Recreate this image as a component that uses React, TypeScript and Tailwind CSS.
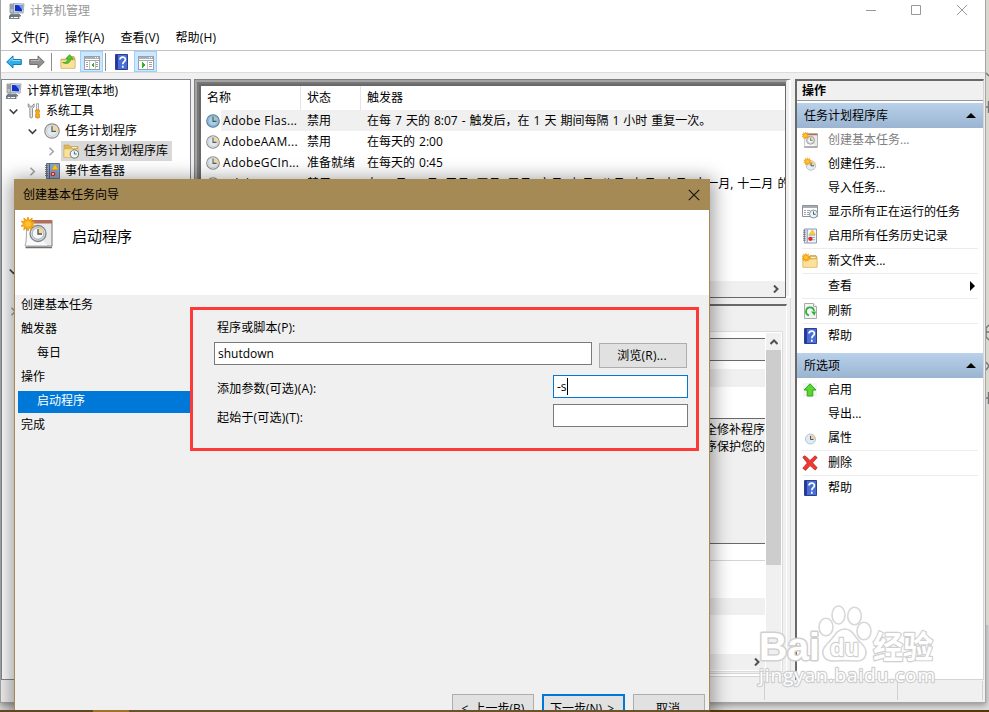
import React from "react";

type P = { className?: string };

const Clock = ({ className = "w-[14px] h-[14px]", blue = false }: P & { blue?: boolean }) => (
  <svg className={className} viewBox="0 0 16 16">
    <circle cx="8" cy="8" r="7.2" fill={blue ? "#9cc3df" : "#f1efe8"} stroke={blue ? "#547f9e" : "#8d8d8d"} strokeWidth="1.2" />
    <circle cx="8" cy="8" r="5.4" fill={blue ? "#a9cde6" : "#dfe8ee"} stroke={blue ? "#7ba5c2" : "#b9bfc3"} strokeWidth=".7" />
    <path d="M8 8V2.8A5.2 5.2 0 0 1 13.2 8Z" fill={blue ? "#b5c3a3" : "#fbd68b"} />
    <path d="M8 3.2V8.4H12" fill="none" stroke={blue ? "#2c5c80" : "#4c5f70"} strokeWidth="1.2" />
  </svg>
);

const SmallClock = () => (
  <svg className="h-4 w-4" viewBox="0 0 16 16">
    <circle cx="8.5" cy="9" r="5" fill="#dfebf4" stroke="#b3c4d2" />
    <path d="M8.500 9V4.500A4.500 4.500 0 0 1 13 9z" fill="#f6cd90" />
    <path d="M8.500 6v3.500h3" fill="none" stroke="#405a72" />
  </svg>
);

const Computer = () => (
  <svg className="w-4 h-4" viewBox="0 0 16 16">
    <path d="M1 1h4v9H1z" fill="#b8c0c8" stroke="#7d868e" strokeWidth=".7" />
    <path d="M1.5 3h3M1.5 5h3" stroke="#5c7080" strokeWidth=".8" />
    <path d="M4.6.6 15 .9l-.9 9.3-9.5-1z" fill="#d7dde4" stroke="#87919b" strokeWidth=".7" />
    <path d="m6 2 7.6.2-.7 6.4L6 8z" fill="#1530c8" />
    <path d="m9.5 2.1 4.1.1-.5 4.4z" fill="#79a6f4" />
    <path d="M2 11h8l2 2H1zM0 13h10v3H0z" fill="#8e98a2" stroke="#56616b" strokeWidth=".7" />
    <path d="M2 14.5h2M5 14.5h4" stroke="#fff" />
  </svg>
);

const Tools = () => (
  <svg className="w-3.5 h-4" viewBox="0 0 14 16">
    <path d="M1.2.8v3l1.7 1.6v8.8q1.3 1.6 2.6 0V5.4l1.6-1.6v-3L5.3 2.6v1.2H3V2.6z" fill="#e5e5e5" stroke="#777" strokeWidth=".8" />
    <path d="M9.5.7h2V7h-2z" fill="#eee" stroke="#888" strokeWidth=".7" />
    <path d="M8.5 7h4v2l-.8 1 .8 1v3.5q-2 1.5-4 0V11l.8-1-.8-1z" fill="#f5aa1c" stroke="#c97d08" strokeWidth=".6" />
  </svg>
);

const Burst = ({ x, y, r }: { x: number; y: number; r: number }) => (
  <g transform={`translate(${x} ${y}) scale(${r / 10})`}>
    <path
      d="M0-10 2-5.2 6-8.6 5.2-3.3 10-3.4 6.2 0 10 4 4.8 3.7 5.4 8.7 1.6 5.3 0 10-2 5.3-6.2 8.5-5 3.5-10 3 -6.4 0-10-4-5-3.5-6-8.6-2-5.4z"
      fill="#ffad12"
      stroke="#e68900"
      strokeWidth="1"
    />
    <circle r="3.6" fill="#ffc83e" />
  </g>
);

const Folder = ({ className = "w-4 h-4", kind = "" }: P & { kind?: string }) => (
  <svg className={className} viewBox="0 0 16 16">
    <path d={kind === "clock" ? "M1 2h5l1.200 1.500H15V14H1z" : "M8 2.500h6l1 1.500v10H1V5h6z"} fill="#dfb658" stroke="#c49a40" strokeWidth=".6" />
    <path d="M1 6h14v8.4H1z" fill="#fae19c" stroke="#d9b35b" strokeWidth=".6" />
    <path d="M9 4.500h4.500" stroke="#fff" strokeWidth=".8" />
    {kind === "up" && <path d="M2.5 8.5C6 9 7.5 7.5 8 4.5H5.8L9.8.6l3.4 4.6-2.4-.3C10.2 9 7 11 2.5 8.5z" fill="#52c92d" stroke="#2d971a" strokeWidth=".6" />}
    {kind === "star" && <Burst x={4} y={4.5} r={4.2} />}
    {kind === "clock" && (
      <g>
        <circle cx="11.4" cy="11" r="4.2" fill="#eef4f8" stroke="#647a8a" strokeWidth="1" />
        <path d="M11.4 8.5V11h2.3" stroke="#40586c" fill="none" strokeWidth=".9" />
      </g>
    )}
  </svg>
);

const Help = ({ className = "w-[13px] h-4" }: P) => (
  <svg className={className} viewBox="0 0 13 16">
    <path d="M.5.5h12v15H.5z" fill="#4a6fd4" stroke="#2a3f94" />
    <path d="M1 1h2v14H1z" fill="#26389a" />
    <path d="M5 5.6C5 2.4 10.4 2.3 10.4 5.4 10.4 7.6 7.8 7.5 7.8 10.2M7.8 11.8v2" fill="none" stroke="#fff" strokeWidth="1.7" />
  </svg>
);

const Pane = ({ left = false }: { left?: boolean }) => (
  <svg className="w-4 h-[14px]" viewBox="0 0 16 14" shapeRendering="crispEdges">
    <path d="M.5.5h15v13H.5z" fill="#fff" stroke="#9aa0a6" />
    <path d="M1 1h14v2H1z" fill="#a7b0b8" />
    <path d="M11 1.5h1m1 0h1" stroke="#fff" />
    <path d="M1 4.5h14" stroke="#a2a9af" />
    {left ? (
      <g>
        <path d="M5.5 5v8M11.5 5v8" stroke="#c2c2c2" />
        <path d="M2 6.5h2m-2 2h2m-2 2h2m8-4h2m-2 2h2m-2 2h2" stroke="#a0a0a0" />
        <path d="M10 6v6L7 9z" fill="#33b322" />
      </g>
    ) : (
      <g>
        <path d="M9.5 5v8" stroke="#c2c2c2" />
        <path d="M11 6.5h3m-3 2h3m-3 2h3" stroke="#a0a0a0" />
        <path d="M4 6v6l3-3z" fill="#33b322" />
      </g>
    )}
  </svg>
);

const Arrow = ({ back = false }: { back?: boolean }) => (
  <svg className="w-4 h-[14px]" viewBox="0 0 16 14">
    <path
      d={back ? "M.7 7 7 .9v3.6h8.3v5H7v3.6z" : "M15.3 7 9 .9v3.6H.7v5H9v3.6z"}
      fill={back ? "#2faee8" : "#929292"}
      stroke={back ? "#1778b8" : "#707070"}
    />
    <path d={back ? "M3 6.5 6.3 3.3v2.2h8" : "M2 5.5h8V3.2"} fill="none" stroke={back ? "#8fdcfb" : "#bcbcbc"} />
  </svg>
);

const Book = ({ className = "w-[15px] h-4", dark = false }: P & { dark?: boolean }) => (
  <svg className={className} viewBox="0 0 15 16">
    <path d="M1.5.5h13v15h-13z" fill={dark ? "#8fa3c6" : "#f0f4fa"} stroke={dark ? "#61718f" : "#8490a8"} />
    <path d="M4.5 1v14" stroke={dark ? "#4d5d80" : "#7686a6"} />
    <path d="M0 2.5h3m-3 2h3m-3 2h3m-3 2h3m-3 2h3m-3 2h3" stroke="#666" strokeWidth=".8" />
    <path d="M6 7h7M6 9.5h7M6 12h7" stroke="#7f92b4" strokeWidth=".8" />
    <path d="m10 1.5 3 5H7z" fill="#ffd21c" stroke="#e0a90f" strokeWidth=".6" />
    <circle cx="8" cy="11" r="2.3" fill="#dd2b20" />
    {dark && <path d="m7 10 2 2m0-2-2 2" stroke="#fff" strokeWidth=".7" />}
  </svg>
);

const BasicTask = ({ className = "w-4 h-4" }: P) => (
  <svg className={className} viewBox="0 0 32 32">
    <path d="M6 4h25v25H6z" fill="#e9e9e9" stroke="#8b8b8b" strokeWidth="1.2" />
    <path d="M7 3h24v3.5H7z" fill="#b0705a" />
    <path d="m6 7-1 18-1 4h23" fill="#fafafa" stroke="#aaa" />
    <path d="M4.500 30.500h26.500" stroke="#6f6f6f" strokeWidth="1.5" />
    <circle cx="17" cy="16.500" r="8" fill="#d9dfe4" stroke="#7d858c" strokeWidth="1.3" />
    <circle cx="17" cy="16.500" r="5.800" fill="#f5f7f8" stroke="#a3abb1" />
    <path d="M17 16.500v-5.500a5.500 5.500 0 0 1 5.500 5.500z" fill="#fbd68b" />
    <path d="M17 12v5h4" fill="none" stroke="#3f5364" strokeWidth="1.3" />
    <Burst x={7} y={7} r={7} />
  </svg>
);

const NewTask = () => (
  <svg className="w-4 h-4" viewBox="0 0 16 16">
    <circle cx="9" cy="9.500" r="4.700" fill="#e3edf4" stroke="#b4c5d2" />
    <path d="M9 9.500V5a4.500 4.500 0 0 1 4.500 4.500z" fill="#f9cf87" />
    <path d="M9 6.500v3.300h3" stroke="#405a72" fill="none" />
    <Burst x={5.5} y={5.5} r={3.8} />
  </svg>
);

const Running = () => (
  <svg className="w-4 h-4" viewBox="0 0 16 16">
    <path d="M.5 1.500h15v11H.5z" fill="#fff" stroke="#8b9299" />
    <path d="M1 2h14v2H1z" fill="#a7adb3" />
    <path d="M2 6.500h2m1 0h3m-6 2h2m1 0h2m-5 2h2m1 0h2" stroke="#999" strokeWidth=".9" />
    <circle cx="11.500" cy="10" r="4" fill="#edf3f7" stroke="#8496a4" />
    <path d="M11.500 7.500v2.800h2.200" stroke="#405a72" fill="none" />
  </svg>
);

const Refresh = () => (
  <svg className="w-[13px] h-4" viewBox="0 0 13 16">
    <path d="M.5.5h9l3 3v12H.5z" fill="#f4f4f4" stroke="#aaa" />
    <path d="M9.500.5v3h3" fill="#fff" stroke="#aaa" />
    <path d="M5 12.300A4 4 0 1 1 10 8" fill="none" stroke="#2caf3b" strokeWidth="1.8" />
    <path d="M7 8.500h5l-1.500 4.200z" fill="#2caf3b" />
  </svg>
);

const Up = () => (
  <svg className="w-[14px] h-[14px]" viewBox="0 0 14 14">
    <path d="M0 0h14v14H0z" fill="#f4f4f4" />
    <path d="m7 .8 6 6.200H9.800V13H4.200V7H1z" fill="#5bd52f" stroke="#2fa51d" />
  </svg>
);

const Delete = () => (
  <svg className="w-4 h-4" viewBox="0 0 16 16">
    <path d="M.8 2.300Q2 0 4 1.500L8 5.600l5-4.800 2.200 1.800-4.700 5.200 4.700 5-2 2.300L8 10.600l-4.500 4.800-2.700-2.200L5.300 8z" fill="#ee3831" stroke="#b62a28" strokeWidth=".8" />
  </svg>
);

const Chev = ({ open = false, light = false }: { open?: boolean; light?: boolean }) => (
  <svg className="w-[9px] h-[9px] shrink-0" viewBox="0 0 9 9">
    <path d={open ? "M.7 2.500 4.500 6.300 8.300 2.500" : "M2.500.7 6.300 4.500 2.500 8.300"} fill="none" stroke={light ? "#a5a5a5" : "#404040"} strokeWidth="1.600" />
  </svg>
);

const ScrollChev = ({ rot = "" }: { rot?: string }) => (
  <svg className={`w-2 h-2 ${rot}`} viewBox="0 0 8 8">
    <path d="M2 .5 5.500 4 2 7.500" fill="none" stroke="#505050" strokeWidth="2" />
  </svg>
);

const actions: { t: string; icon?: React.ReactNode; dim?: boolean; sep?: boolean; sub?: boolean }[] = [
  { t: "创建基本任务...", icon: <BasicTask />, dim: true },
  { t: "创建任务...", icon: <NewTask /> },
  { t: "导入任务..." },
  { t: "显示所有正在运行的任务", icon: <Running /> },
  { t: "启用所有任务历史记录", icon: <Book className="w-[14px] h-4" />, sep: true },
  { t: "新文件夹...", icon: <Folder kind="star" />, sep: true },
  { t: "查看", sep: true, sub: true },
  { t: "刷新", icon: <Refresh />, sep: true },
  { t: "帮助", icon: <Help /> },
];
const selected: typeof actions = [
  { t: "启用", icon: <Up /> },
  { t: "导出..." },
  { t: "属性", icon: <SmallClock />, sep: true },
  { t: "删除", icon: <Delete />, sep: true },
  { t: "帮助", icon: <Help /> },
];

const ActionList = ({ items }: { items: typeof actions }) => (
  <div>
    {items.map((a) => (
      <React.Fragment key={a.t}>
        <div className={`flex h-6 items-center pl-[5px] ${a.dim ? "text-[#808080]" : ""}`}>
          <span className="flex w-4 justify-center">{a.icon}</span>
          <span className="ml-[10px] flex-1">{a.t}</span>
          {a.sub && <span className="mr-2 border-y-[5px] border-l-[5px] border-y-transparent border-l-black" />}
        </div>
        {a.sep && <div className="mx-[5px] h-px bg-[#ececec]" />}
      </React.Fragment>
    ))}
  </div>
);

const SectionHead = ({ t }: { t: string }) => (
  <div className="flex h-[25px] items-center justify-between bg-linear-to-b from-[#b9d1ea] to-[#9ab4d1] pl-[7px] pr-[7px]">
    <span>{t}</span>
    <span className="border-x-[5px] border-b-[5px] border-x-transparent border-b-black" />
  </div>
);

const TaskRow = ({ n, s, t, hi = false }: { n: string; s: string; t: string; hi?: boolean }) => (
  <div className="flex h-[21px] shrink-0 items-center whitespace-nowrap">
    <span className="flex w-5 shrink-0 justify-end pr-px"><Clock blue={hi} /></span>
    <div className={`flex h-full flex-1 items-center ${hi ? "bg-[#f0f0f0]" : ""}`}>
      <span className="w-[84px] shrink-0 pl-[2px] tracking-[0.3px]">{n}</span>
      <span className="w-[60px] shrink-0 pl-[2px]">{s}</span>
      <span className="pl-[2px] [word-spacing:0.9px]">{t}</span>
    </div>
  </div>
);

const Toolbar = () => (
  <div className="flex h-[22px] items-center border-t border-[#c3c3c3] pl-[5px]">
    <Arrow back />
    <span className="ml-[7px] flex"><Arrow /></span>
    <span className="ml-[6px] h-[18px] w-px bg-[#8c8c8c]" />
    <span className="ml-2 flex"><Folder kind="up" /></span>
    <span className="ml-1 flex h-[21px] w-[23px] items-center justify-center border border-[#99d1ff] bg-[#cce8ff] pt-[2px]"><Pane left /></span>
    <span className="ml-[2px] h-[18px] w-px bg-[#8c8c8c]" />
    <span className="ml-[9px] flex"><Help /></span>
    <span className="ml-[6px] flex h-[21px] w-[23px] items-center justify-center border border-[#99d1ff] bg-[#cce8ff] pt-[2px]"><Pane /></span>
  </div>
);

const Tree = () => (
  <div className="h-[601px] w-[190px] shrink-0 overflow-hidden border border-[#828790] bg-white pt-px">
    <div className="flex h-5 items-center pl-1"><Computer /><span className="ml-[5px]">计算机管理(本地)</span></div>
    <div className="flex h-5 items-center pl-[7px]"><Chev open /><span className="ml-[9px] flex"><Tools /></span><span className="ml-[5px]">系统工具</span></div>
    <div className="flex h-5 items-center pl-[26px]"><Chev open /><span className="ml-[7px] flex"><Clock className="h-4 w-4" /></span><span className="ml-[5px]">任务计划程序</span></div>
    <div className="flex h-5 items-center pl-[45px]"><Chev light /><span className="ml-[5px] flex h-5 w-[111px] items-center bg-[#d9d9d9] pl-[2px]"><Folder kind="clock" /><span className="ml-[5px]">任务计划程序库</span></span></div>
    <div className="flex h-5 items-center pl-[26px]"><Chev light /><span className="ml-[8px] flex"><Book dark /></span><span className="ml-[5px]">事件查看器</span></div>
    <div className="mt-[80px] flex h-5 items-center pl-[7px]"><Chev open /></div>
    <div className="mt-[20px] flex h-5 items-center pl-[7px]"><Chev light /></div>
  </div>
);

const TaskList = () => (
  <div className="h-[219px] w-[597px] border-l border-t border-r-2 border-b-2 border-[#808080] border-r-white border-b-white">
    <div className="h-[216px] w-[592px] border-l-2 border-t-2 border-r border-[#a3a3a3] border-r-transparent">
      <div className="h-[216px] border-l-2 border-t-2 border-[#777]">
        <div className="flex h-[214px] flex-col overflow-hidden border-2 border-b border-r border-[#696969] bg-white">
          <div className="flex h-[24px] shrink-0 items-center">
            <span className="flex h-full w-[100px] items-center border-r border-[#e5e5e5] pl-[6px]">名称</span>
            <span className="flex h-full w-[60px] items-center border-r border-[#e5e5e5] pl-[6px]">状态</span>
            <span className="pl-[6px]">触发器</span>
          </div>
          <TaskRow hi n="Adobe Flas..." s="禁用" t="在每 7 天的 8:07 - 触发后，在 1 天 期间每隔 1 小时 重复一次。" />
          <TaskRow n="AdobeAAM..." s="禁用" t="在每天的 2:00" />
          <TaskRow n="AdobeGCIn..." s="准备就绪" t="在每天的 0:45" />
          <TaskRow n="AdobeARM..." s="禁用" t="在 一月, 二月, 三月, 四月, 五月, 六月, 七月, 八月, 九月, 十月, 十一月, 十二月 的" />
          <div className="flex-1" />
          <div className="flex h-4 shrink-0 items-center justify-end bg-[#f0f0f0] pr-[5px]"><ScrollChev /></div>
        </div>
      </div>
    </div>
  </div>
);

const Details = () => (
  <div className="mt-[6px] flex h-[375px] w-[593px] flex-col border-l border-t-2 border-r border-[#696969] border-r-white bg-[#f0f0f0]">
    <div className="mt-[25px] flex h-[341px] w-[588px] shrink-0 border border-[#dcdcdc] bg-white pt-px">
      <div className="flex w-[569px] flex-col">
        <div className="mt-[5px] h-[23px] border-y border-[#696969] bg-[#f0f0f0]" />
        <div className="mt-2 h-[18px] bg-[#f0f0f0]" />
        <div className="mt-[31px] h-[126px] border-y border-[#696969] bg-[#f0f0f0] pt-[2px] text-right leading-[17px]">
          <div>安全修补程序</div>
          <div>程序保护您的</div>
        </div>
        <div className="mt-[16px] h-px bg-[#d5d5d5]" />
        <div className="mt-[37px] h-[17px] bg-[#f0f0f0]" />
        <div className="mt-[39px] flex h-4 items-center justify-end bg-[#f0f0f0] pr-[4px]"><ScrollChev /></div>
      </div>
      <div className="ml-px flex w-[15px] flex-col items-center bg-[#f0f0f0]">
        <div className="flex h-[17px] items-center"><ScrollChev rot="-rotate-90" /></div>
        <div className="h-[215px] w-full bg-[#cdcdcd]" />
        <div className="mt-[76px] flex h-2"><ScrollChev rot="rotate-90" /></div>
      </div>
    </div>
    <div className="mt-[1px] h-[4px] border-y border-[#d5d5d5] bg-white" />
  </div>
);

const Step = ({ t, sub = false, on = false }: { t: string; sub?: boolean; on?: boolean }) => (
  <div className={`flex h-[22px] items-center pb-[3px] ${sub ? "pl-[19px]" : "pl-[3px]"} ${on ? "bg-[#0078d7] text-white" : ""}`}>{t}</div>
);

const Wizard = () => (
  <div className="absolute left-[14px] top-[179px] flex h-[560px] w-[696px] flex-col border border-[#a68a55] bg-[#f0f0f0] shadow-[0_3px_18px_3px_rgba(0,0,0,0.4)]">
    <div className="flex h-[30px] shrink-0 items-center justify-between bg-[#a68a55] pl-2 pr-[9px]">
      <span>创建基本任务向导</span>
      <svg className="h-3 w-3" viewBox="0 0 12 12"><path d="m.8.8 10.400 10.400M11.200.8.8 11.200" stroke="#111" strokeWidth="1.100" /></svg>
    </div>
    <div className="flex h-[85px] shrink-0 bg-white pl-[6px] pt-[7px]">
      <BasicTask className="h-8 w-8" />
      <span className="ml-[19px] mt-[8px] text-[15px] leading-[22px]">启动程序</span>
    </div>
    <div className="flex flex-1">
      <div className="ml-[3px] flex w-[172px] flex-col gap-[2px]">
        <Step t="创建基本任务" />
        <Step t="触发器" />
        <Step t="每日" sub />
        <Step t="操作" />
        <Step t="启动程序" sub on />
        <Step t="完成" />
      </div>
      <div className="flex w-[519px] flex-col">
        <div className="mt-3 h-[144px] w-[509px] border-[3px] border-[#fd3a38] pl-[21px] pr-2 pt-[9px]">
          <div className="h-[18px] pl-[3px] leading-[18px] tracking-[0.1px]">程序或脚本(P):</div>
          <div className="mt-[5px] flex h-[26px] justify-between">
            <div className="flex h-[23px] w-[378px] items-center border border-[#7a7a7a] bg-white pl-[3px]">shutdown</div>
            <div className="mr-px mt-px flex h-[25px] w-[88px] items-center justify-center border border-[#adadad] bg-[#e1e1e1] pr-[2px] tracking-[0.2px]">浏览(R)...</div>
          </div>
          <div className="mt-[7px] flex h-[23px] items-center justify-between">
            <span className="mt-1 pl-[3px] tracking-[0.2px]">添加参数(可选)(A):</span>
            <div className="flex h-[23px] w-[135px] items-center border border-[#0078d7] bg-white pl-[3px]">-s<span className="h-[17px] w-px bg-black" /></div>
          </div>
          <div className="mt-[6px] flex h-[23px] items-center justify-between">
            <span className="mt-1 pl-[3px] tracking-[0.2px]">起始于(可选)(T):</span>
            <div className="h-[23px] w-[135px] border border-[#7a7a7a] bg-white" />
          </div>
        </div>
        <div className="mt-[243px] flex pl-[262px] [word-spacing:2px]">
          <div className="flex h-[26px] w-[82px] items-center justify-center border border-[#adadad] bg-[#e1e1e1] pt-[3px]">&lt; 上一步(B)</div>
          <div className="ml-2 flex h-[26px] w-[83px] items-center justify-center border-2 border-[#0078d7] bg-[#e1e1e1] pr-[3px] pt-[3px]">下一步(N) &gt;</div>
          <div className="ml-2 flex h-[26px] w-[72px] items-center justify-center border border-[#adadad] bg-[#e1e1e1] pr-[2px] pt-[3px]">取消</div>
        </div>
      </div>
    </div>
  </div>
);

const Watermark = () => (
  <svg className="absolute left-[750px] top-[600px] h-[95px] w-[195px]" viewBox="0 0 195 95">
    <g fill="#fff" fillOpacity=".8" stroke="#bdbdbd" strokeOpacity=".6" strokeWidth="1.600">
      <ellipse cx="76" cy="27" rx="7" ry="8.800" />
      <ellipse cx="88.500" cy="15" rx="6.500" ry="9" />
      <ellipse cx="104.500" cy="16" rx="6.800" ry="8.800" />
      <ellipse cx="114" cy="31" rx="7" ry="8.800" />
      <path d="M95 29c8 0 10 9 16 14 8 7 6 18-4 18-6 0-16-1-22 0-12 1-16-9-8-17 7-6 9-15 18-15z" />
    </g>
    <g fill="#fff" stroke="#d0d0d0" strokeWidth="3" strokeLinejoin="round" paintOrder="stroke" className="font-['Liberation_Sans','Noto_Sans_CJK_SC',sans-serif] font-bold">
      <text x="9" y="60" fontSize="38" textLength="61" lengthAdjust="spacingAndGlyphs">Bai</text>
      <text x="80" y="56" fontSize="24" strokeWidth="2.400" textLength="29" lengthAdjust="spacingAndGlyphs">du</text>
      <text x="123" y="58" fontSize="31" strokeWidth="2.400" textLength="60" lengthAdjust="spacingAndGlyphs">经验</text>
    </g>
    <text x="9" y="82" fontSize="19" fill="#fff" stroke="#cecece" strokeWidth="2.400" strokeLinejoin="round" paintOrder="stroke" textLength="176" lengthAdjust="spacing" className="font-['Open_Sans',sans-serif] font-medium">jingyan.baidu.com</text>
  </svg>
);

export default function App() {
  return (
    <div className="relative h-[712px] w-[989px] overflow-hidden bg-[#dcdcdc] font-['Open_Sans','Noto_Sans_CJK_SC',sans-serif] text-[12px] leading-[16px] text-black">
      <div className="flex">
        <div className="flex h-[703px] w-[986px] flex-col border-r border-b border-l border-[#a5a5a5] bg-[#f0f0f0] shadow-[0_2px_6px_rgba(0,0,0,0.35)]">
          <div className="h-[72px] shrink-0 bg-white">
            <div className="flex h-[21px] items-center pl-2 text-[#999]">
              <Computer /><span className="ml-[5px] flex-1">计算机管理</span>
              <svg className="mr-[13px] h-[12px] w-[106px]" viewBox="0 0 106 12" fill="none" stroke="#999">
                <path d="M0 5.500h10M45.500.5h9v9h-9zM91 0l10 10M101 0 91 10" />
              </svg>
            </div>
            <div className="flex h-[29px] items-center gap-[16px] pl-[10px] pt-[5px] tracking-[0.15px]">
              <span>文件(F)</span><span>操作(A)</span><span>查看(V)</span><span>帮助(H)</span>
            </div>
            <Toolbar />
          </div>
          <div className="flex h-[609px] shrink-0 border-t border-[#dcdcdc] pt-[6px]">
            <Tree />
            <div className="ml-[3px] flex h-[601px] w-[597px] shrink-0 flex-col border-r border-[#dcdcdc]">
              <TaskList />
              <Details />
            </div>
            <div className="ml-[4px] h-[601px] w-[189px] shrink-0 border-l-2 border-t-2 border-r border-b border-[#696969] border-r-[#d5d5d5] border-b-[#d5d5d5] bg-white">
              <div className="mb-[2px] h-5 border-b border-[#999] bg-[#f0f0f0] pl-[5px] font-bold leading-[20px]">操作</div>
              <SectionHead t="任务计划程序库" />
              <ActionList items={actions} />
              <div className="h-[5px]" />
              <SectionHead t="所选项" />
              <ActionList items={selected} />
            </div>
          </div>
          <div className="flex h-[19px] justify-end pr-[2px]">
            <div className="w-[133px] border-l border-[#d0d0d0]" />
            <div className="w-[86px] border-x border-[#d0d0d0]" />
          </div>
        </div>
        <div className="flex h-[625px] w-[3px] flex-col bg-[#d9d8cd] text-[#686868]">
          <svg className="h-[625px] w-[3px]" viewBox="0 0 3 625" fill="none" stroke="#777" strokeWidth="1.500">
            <path d="M0 73l3 3M0 107h3M2.500 101v12M3 325l-3 3v9l3 3M0 332h3M0 362l3 4-3 4M0 398h3M2.500 392v12" />
          </svg>
        </div>
      </div>
      <Wizard />
      <Watermark />
      <div className="absolute bottom-0 left-0 flex h-[2px] w-full bg-[#573708]">
        <div className="h-full w-[93px] bg-[#61471f]" />
        <div className="h-full w-9 bg-[#a0722a]" />
        <div className="h-full w-[581px] bg-[#6b5229]" />
      </div>
    </div>
  );
}
